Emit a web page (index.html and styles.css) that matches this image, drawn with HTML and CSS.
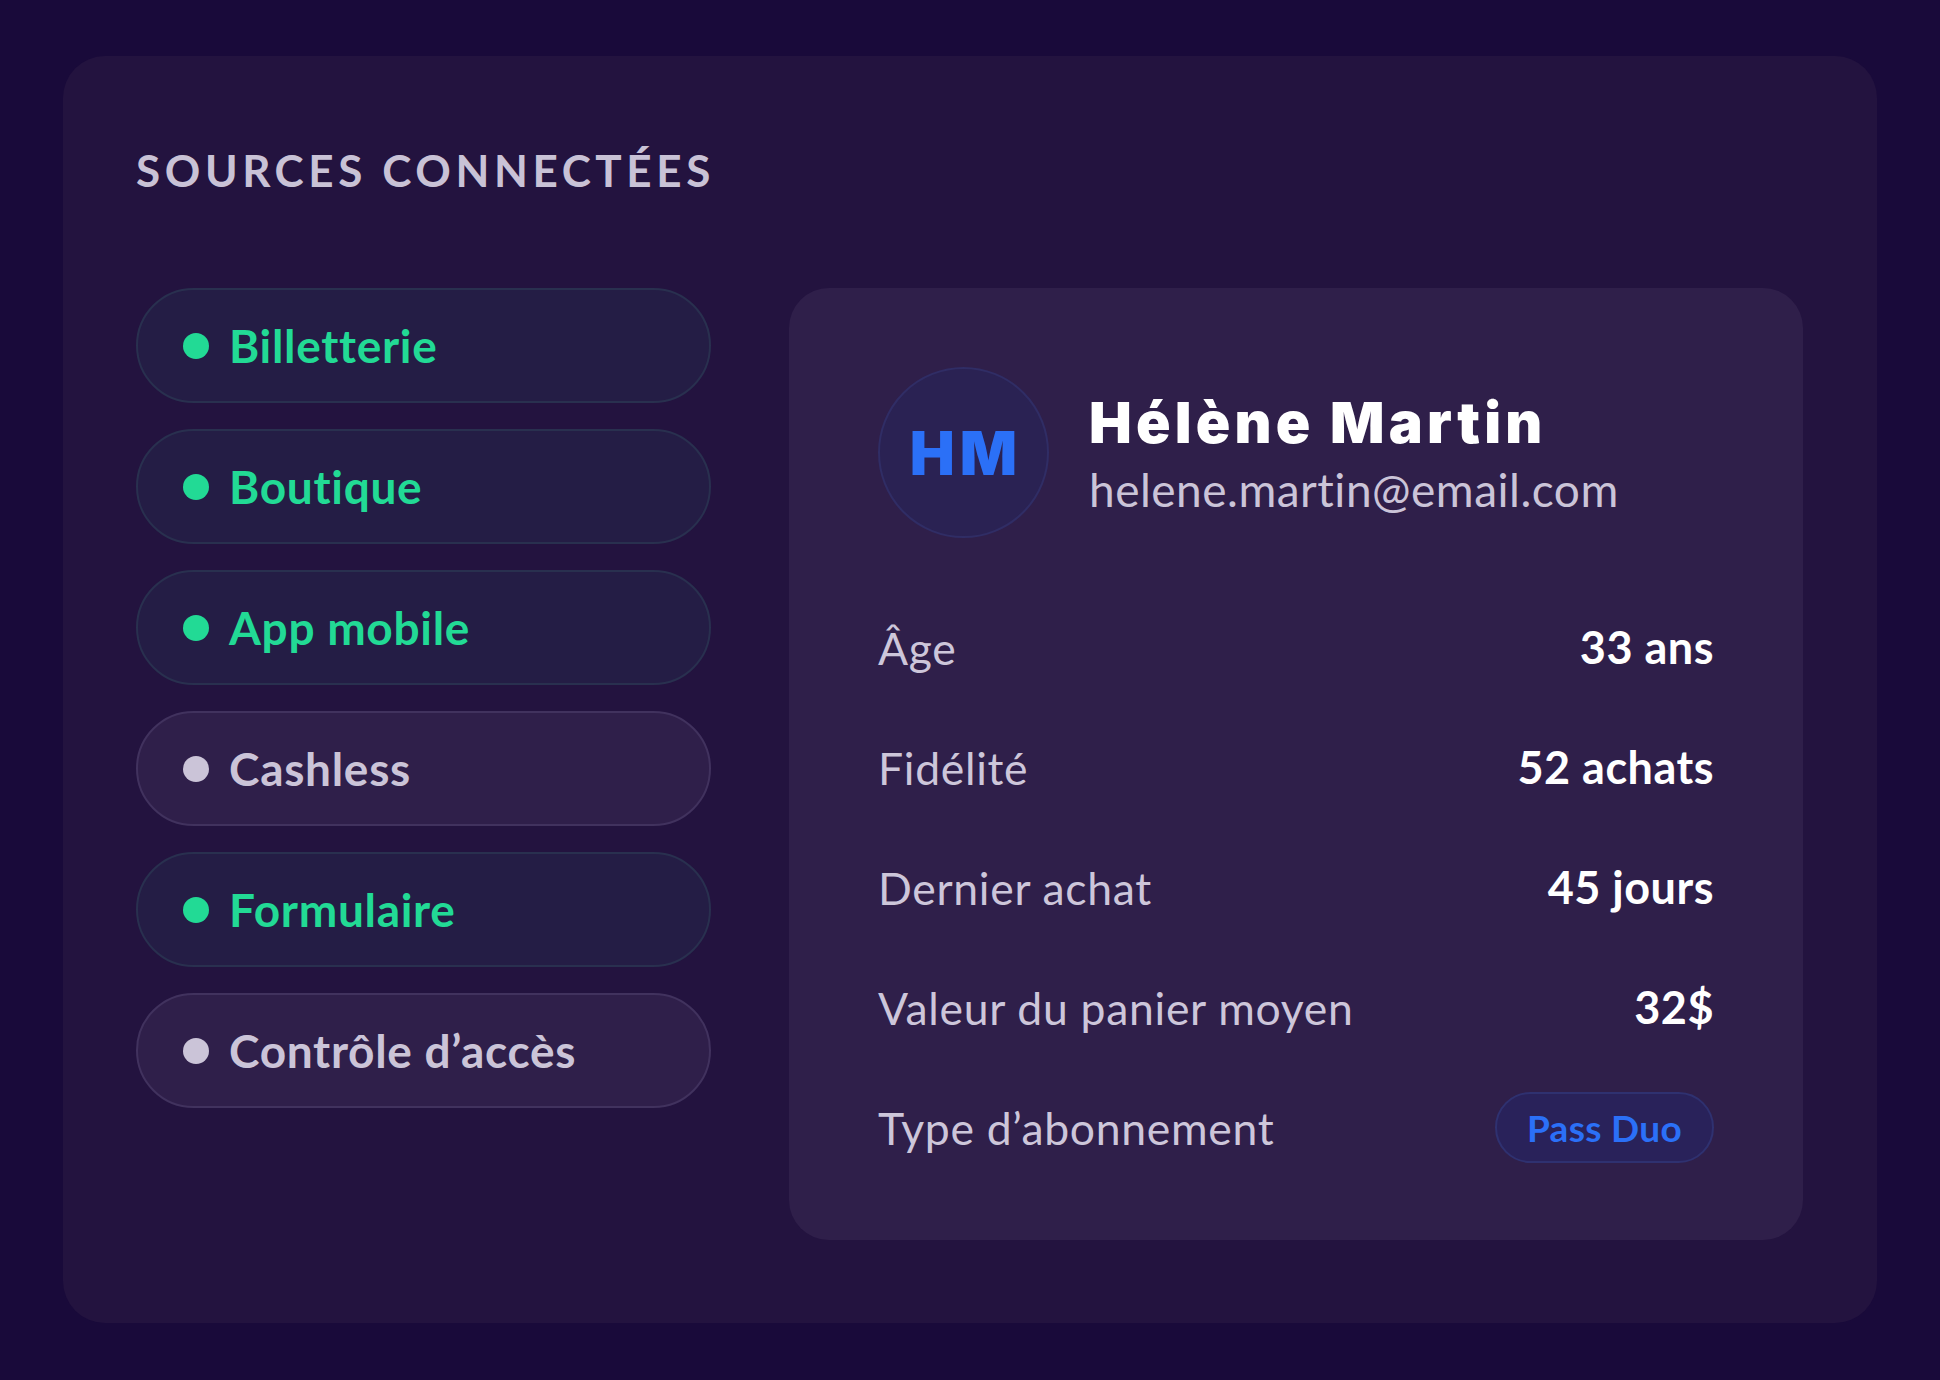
FILE: index.html
```html
<!DOCTYPE html>
<html lang="fr">
<head>
<meta charset="utf-8">
<title>Sources connectées</title>
<link rel="stylesheet" href="styles.css">
</head>
<body>
<main class="panel">
  <h1 class="panel-title">SOURCES CONNECTÉES</h1>
  <div class="panel-body">
    <ul class="sources">
      <li class="source source--on"><span class="dot"></span><span class="source-name">Billetterie</span></li>
      <li class="source source--on"><span class="dot"></span><span class="source-name">Boutique</span></li>
      <li class="source source--on"><span class="dot"></span><span class="source-name">App mobile</span></li>
      <li class="source source--off"><span class="dot"></span><span class="source-name">Cashless</span></li>
      <li class="source source--on"><span class="dot"></span><span class="source-name">Formulaire</span></li>
      <li class="source source--off"><span class="dot"></span><span class="source-name">Contrôle d’accès</span></li>
    </ul>
    <section class="profile">
      <header class="profile-head">
        <div class="avatar">HM</div>
        <div class="identity">
          <div class="name">Hélène Martin</div>
          <div class="email">helene.martin@email.com</div>
        </div>
      </header>
      <dl class="facts">
        <div class="fact"><dt>Âge</dt><dd>33 ans</dd></div>
        <div class="fact"><dt>Fidélité</dt><dd>52 achats</dd></div>
        <div class="fact"><dt>Dernier achat</dt><dd>45 jours</dd></div>
        <div class="fact"><dt>Valeur du panier moyen</dt><dd>32$</dd></div>
        <div class="fact"><dt>Type d’abonnement</dt><dd><span class="badge">Pass Duo</span></dd></div>
      </dl>
    </section>
  </div>
</main>
</body>
</html>
```

FILE: styles.css
```css
* { box-sizing: border-box; }

html, body { height: 100%; }

body {
  margin: 0;
  padding: 56px 63px 57px;
  background: #190a3a;
  font-family: "Lato", "Liberation Sans", sans-serif;
  display: flex;
  flex-direction: column;
}

.panel {
  flex: 1;
  background: #23133f;
  border-radius: 42px;
  padding: 92px 74px 0 73px;
}

.panel-title {
  margin: 0;
  font-size: 44px;
  line-height: 44px;
  font-weight: 700;
  letter-spacing: 4.6px;
  color: #c9c2d6;
}

.panel-body {
  margin-top: 96px;
  display: flex;
  align-items: flex-start;
  gap: 78px;
}

.sources {
  list-style: none;
  margin: 0;
  padding: 0;
  width: 575px;
  flex: none;
  display: flex;
  flex-direction: column;
  gap: 26px;
}

.source {
  height: 115px;
  border-radius: 58px;
  border: 2px solid;
  display: flex;
  align-items: center;
  padding-left: 45px;
  gap: 20px;
  font-size: 46px;
  letter-spacing: 0.7px;
  font-weight: 700;
}

.source--on {
  background: #241d45;
  border-color: #29304f;
  color: #22da95;
}

.source--off {
  background: #2f1f4a;
  border-color: #41325e;
  color: #cbc4d8;
}

.dot {
  width: 26px;
  height: 26px;
  border-radius: 50%;
  background: currentColor;
  flex: none;
}

.profile {
  flex: 1;
  background: #2f1f4a;
  border-radius: 40px;
  padding: 79px 89px 53px 89px;
}

.profile-head {
  display: flex;
  align-items: center;
  gap: 40px;
}

.avatar {
  width: 171px;
  height: 171px;
  border-radius: 50%;
  background: #2a2253;
  border: 2px solid #302d65;
  display: flex;
  align-items: center;
  justify-content: center;
  padding-left: 5px;
  font-family: "Inter", "Liberation Sans", sans-serif;
  font-weight: 900;
  font-size: 60px;
  color: #2b70f7;
  letter-spacing: 5px;
  flex: none;
}

.identity {
  display: flex;
  flex-direction: column;
}

.name {
  font-family: "Inter", "Liberation Sans", sans-serif;
  font-weight: 900;
  font-size: 57px;
  line-height: 71px;
  padding-top: 4px;
  letter-spacing: 4.2px;
  color: #ffffff;
}

.email {
  font-size: 46px;
  line-height: 64px;
  letter-spacing: 0.5px;
  color: #cbc4d8;
}

.facts {
  margin: 49px 0 0;
}

.fact {
  height: 120px;
  display: flex;
  align-items: center;
  justify-content: space-between;
}

.fact dt {
  font-size: 44.5px;
  letter-spacing: 0.7px;
  color: #cdc6da;
}

.fact dd {
  margin: 0;
  font-size: 45px;
  letter-spacing: 0.5px;
  font-weight: 700;
  color: #ffffff;
}

.badge {
  display: inline-flex;
  align-items: center;
  height: 71px;
  padding: 0 30px;
  border-radius: 36px;
  background: #29225a;
  border: 2px solid #2f3170;
  color: #2b70f7;
  font-size: 37px;
  letter-spacing: 0.3px;
  font-weight: 700;
}
```
